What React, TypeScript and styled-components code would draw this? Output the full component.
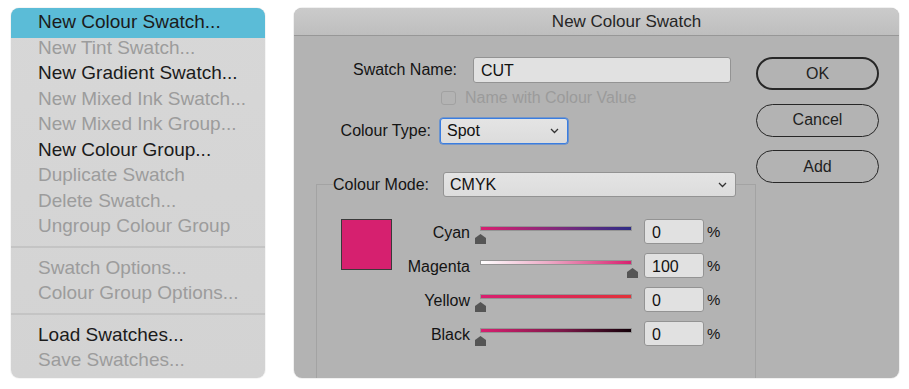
import React from "react";
import styled, { createGlobalStyle } from "styled-components";

const GlobalStyle = createGlobalStyle`
  html, body {
    margin: 0;
    padding: 0;
    background: #ffffff;
  }
  * {
    box-sizing: border-box;
  }
`;

const Page = styled.div`
  display: flex;
  align-items: flex-start;
  gap: 29px;
  padding: 8px 0 0 11px;
  width: 909px;
  height: 389px;
  overflow: hidden;
`;

/* ---------- context menu ---------- */

const Menu = styled.ul`
  list-style: none;
  margin: 0;
  padding: 1px 0 6px;
  width: 254px;
  height: 370px;
  border-radius: 8px;
  overflow: hidden;
  background: linear-gradient(180deg, #d7d7d7 0%, #d3d3d3 100%);
  box-shadow: 0 0 0 1px rgba(0, 0, 0, 0.04);
  font-family: "Liberation Sans", Arial, sans-serif;
  font-size: 19px;
`;

const MenuItem = styled.li<{ $disabled?: boolean; $active?: boolean }>`
  position: relative;
  z-index: 0;
  height: 25.5px;
  line-height: 25.5px;
  padding-left: 27px;
  white-space: nowrap;
  color: ${(p) => (p.$disabled ? "#9c9c9c" : "#1b1b1b")};

  &::before {
    content: "";
    display: ${(p) => (p.$active ? "block" : "none")};
    position: absolute;
    z-index: -1;
    left: 0;
    right: 0;
    top: -2px;
    bottom: -3.5px;
    background: #5bbcd7;
  }
`;

const MenuSeparator = styled.li`
  height: 2px;
  margin: 7px 0;
  background: #c4c4c4;
`;

/* ---------- dialog ---------- */

const Dialog = styled.div`
  width: 605px;
  height: 370px;
  border-radius: 8px;
  overflow: hidden;
  background: #b3b3b3;
  box-shadow: 0 0 0 1px rgba(0, 0, 0, 0.06);
  font-family: "Liberation Sans", Arial, sans-serif;
  font-size: 16px;
  color: #141414;
`;

const TitleBar = styled.div`
  height: 28px;
  line-height: 28px;
  padding-left: 60px;
  text-align: center;
  font-size: 17px;
  color: #262626;
  background: linear-gradient(180deg, #cbcbcb 0%, #bebebe 100%);
  border-bottom: 1px solid #979797;
`;

const DialogBody = styled.div`
  display: flex;
`;

const FormColumn = styled.div`
  width: 462px;
  padding-top: 21px;
  display: flex;
  flex-direction: column;
`;

const FieldRow = styled.div<{ $labelWidth: number; $gap: number; $top?: number }>`
  display: flex;
  align-items: center;
  gap: ${(p) => p.$gap}px;
  margin-top: ${(p) => p.$top ?? 0}px;

  & > label {
    width: ${(p) => p.$labelWidth}px;
    text-align: right;
    white-space: nowrap;
  }
`;

const TextInput = styled.div<{ $width: number }>`
  width: ${(p) => p.$width}px;
  height: 26px;
  line-height: 25px;
  padding-left: 7px;
  background: #e1e1e1;
  border: 1px solid #939393;
  border-radius: 3px;
  color: #111;
`;

const CheckRow = styled.div`
  display: flex;
  align-items: center;
  gap: 9px;
  margin-top: 7px;
  padding-left: 147px;
  height: 15px;
  color: #9b9b9b;
`;

const CheckBox = styled.span`
  width: 15px;
  height: 14px;
  border: 1px solid #a1a1a1;
  border-radius: 3px;
`;

const Select = styled.div<{ $width: number; $focused?: boolean }>`
  display: flex;
  align-items: center;
  justify-content: space-between;
  width: ${(p) => p.$width}px;
  height: ${(p) => (p.$focused ? 26 : 25)}px;
  padding: 0 8px 0 6px;
  background: linear-gradient(180deg, #e4e4e4 0%, #dcdcdc 100%);
  border: 1px solid ${(p) => (p.$focused ? "#3a7de0" : "#939393")};
  box-shadow: ${(p) => (p.$focused ? "0 0 0 0.6px #3a7de0" : "none")};
  border-radius: 3px;
  color: #111;
`;

const Chevron = () => (
  <svg width="9" height="6" viewBox="0 0 9 6">
    <path d="M1 1 L4.5 4.5 L8 1" fill="none" stroke="#333" strokeWidth="1.3" />
  </svg>
);

const GroupBox = styled.fieldset`
  margin: 28px 0 0 22px;
  padding: 0;
  width: 440px;
  height: 240px;
  border: 1px solid #a3a3a3;
  border-bottom: none;
  border-radius: 0;
  min-width: 0;
`;

const GroupLegend = styled.legend`
  display: flex;
  align-items: center;
  gap: 5px;
  margin-left: 16px;
  padding: 0;

  & > span {
    width: 105px;
    white-space: nowrap;
  }
`;

const GroupContent = styled.div`
  display: flex;
  align-items: flex-start;
  padding: 22px 0 0 24px;
`;

const Swatch = styled.div<{ $color: string }>`
  width: 51px;
  height: 51px;
  background: ${(p) => p.$color};
  border: 1px solid #3a3a3a;
`;

const SliderGrid = styled.div`
  display: grid;
  grid-template-columns: 78px 152px 60px auto;
  column-gap: 10px;
  row-gap: 9px;
  align-items: center;

  & > :nth-child(4n + 3) {
    margin-left: 2px;
  }
  & > :nth-child(4n) {
    margin-left: -5px;
  }
`;

const SliderLabel = styled.span`
  text-align: right;
  padding-top: 2px;
`;

const Slider = styled.div`
  position: relative;
  height: 25px;
`;

const Track = styled.div<{ $gradient: string }>`
  margin-top: 7px;
  height: 5px;
  border: 1px solid #949494;
  background: ${(p) => p.$gradient};
`;

const Thumb = styled.svg`
  position: absolute;
  top: 15px;
  width: 11px;
  height: 10px;
`;

const NumberBox = styled.div`
  width: 60px;
  height: 25px;
  line-height: 25px;
  padding-left: 7px;
  background: #e1e1e1;
  border: 1px solid #939393;
  border-radius: 3px;
  color: #111;
`;

const Percent = styled.span`
  font-size: 15px;
`;

const ButtonColumn = styled.div`
  display: flex;
  flex-direction: column;
  gap: 13.5px;
  padding-top: 21px;
`;

const PillButton = styled.div<{ $primary?: boolean }>`
  width: 123px;
  height: 33px;
  display: flex;
  align-items: center;
  justify-content: center;
  border: ${(p) => (p.$primary ? "2.5px" : "1.3px")} solid #272727;
  border-radius: 17px;
  color: #1f1f1f;
  font-size: 16px;
`;

const menuItems: Array<{ label: string; disabled?: boolean; active?: boolean } | "sep"> = [
  { label: "New Colour Swatch...", active: true },
  { label: "New Tint Swatch...", disabled: true },
  { label: "New Gradient Swatch..." },
  { label: "New Mixed Ink Swatch...", disabled: true },
  { label: "New Mixed Ink Group...", disabled: true },
  { label: "New Colour Group..." },
  { label: "Duplicate Swatch", disabled: true },
  { label: "Delete Swatch...", disabled: true },
  { label: "Ungroup Colour Group", disabled: true },
  "sep",
  { label: "Swatch Options...", disabled: true },
  { label: "Colour Group Options...", disabled: true },
  "sep",
  { label: "Load Swatches..." },
  { label: "Save Swatches...", disabled: true },
];

const inks = [
  { name: "Cyan", value: 0, gradient: "linear-gradient(90deg, #d81f70 0%, #7a2a7c 55%, #2e2c86 100%)" },
  { name: "Magenta", value: 100, gradient: "linear-gradient(90deg, #ffffff 0%, #ecaac6 45%, #d8206f 100%)" },
  { name: "Yellow", value: 0, gradient: "linear-gradient(90deg, #d81f70 0%, #de2a4c 70%, #e2333a 100%)" },
  { name: "Black", value: 0, gradient: "linear-gradient(90deg, #d81f70 0%, #7a1848 55%, #120008 100%)" },
];

export default function App() {
  return (
    <>
      <GlobalStyle />
      <Page>
        <Menu>
          {menuItems.map((item, i) =>
            item === "sep" ? (
              <MenuSeparator key={i} />
            ) : (
              <MenuItem key={i} $disabled={item.disabled} $active={item.active}>
                {item.label}
              </MenuItem>
            )
          )}
        </Menu>

        <Dialog>
          <TitleBar>New Colour Swatch</TitleBar>
          <DialogBody>
            <FormColumn>
              <FieldRow $labelWidth={163} $gap={16}>
                <label>Swatch Name:</label>
                <TextInput $width={258}>CUT</TextInput>
              </FieldRow>
              <CheckRow>
                <CheckBox />
                <span>Name with Colour Value</span>
              </CheckRow>
              <FieldRow $labelWidth={137} $gap={9} $top={13}>
                <label>Colour Type:</label>
                <Select $width={128} $focused>
                  <span>Spot</span>
                  <Chevron />
                </Select>
              </FieldRow>

              <GroupBox>
                <GroupLegend>
                  <span>Colour Mode:</span>
                  <Select $width={293}>
                    <span>CMYK</span>
                    <Chevron />
                  </Select>
                </GroupLegend>
                <GroupContent>
                  <Swatch $color="#d6206f" />
                  <SliderGrid>
                    {inks.map((ink) => (
                      <React.Fragment key={ink.name}>
                        <SliderLabel>{ink.name}</SliderLabel>
                        <Slider>
                          <Track $gradient={ink.gradient} />
                          <Thumb
                            viewBox="0 0 11 10"
                            style={{ left: `calc(${ink.value}% - 5.5px)` }}
                          >
                            <path d="M5.5 0 L11 4 L11 10 L0 10 L0 4 Z" fill="#555" />
                          </Thumb>
                        </Slider>
                        <NumberBox>{ink.value}</NumberBox>
                        <Percent>%</Percent>
                      </React.Fragment>
                    ))}
                  </SliderGrid>
                </GroupContent>
              </GroupBox>
            </FormColumn>

            <ButtonColumn>
              <PillButton $primary>OK</PillButton>
              <PillButton>Cancel</PillButton>
              <PillButton>Add</PillButton>
            </ButtonColumn>
          </DialogBody>
        </Dialog>
      </Page>
    </>
  );
}
